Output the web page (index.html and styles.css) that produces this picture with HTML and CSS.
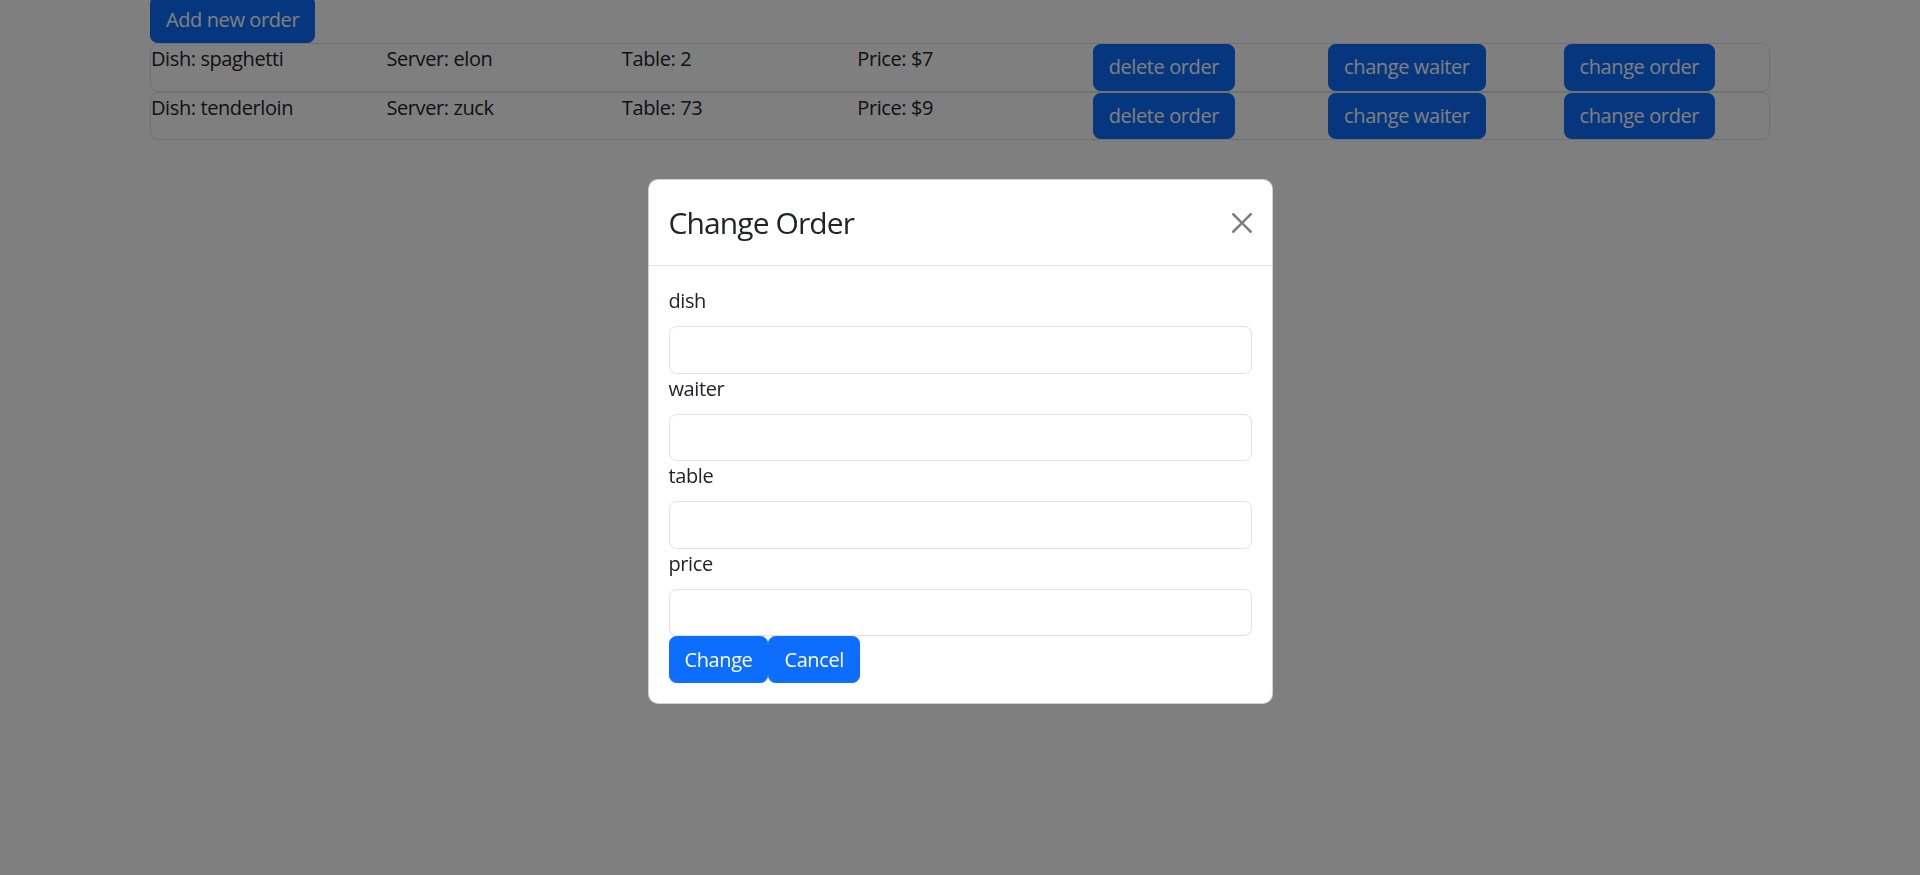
FILE: index.html
```html
<!DOCTYPE html>
<html lang="en">
<head>
<meta charset="utf-8">
<title>Orders</title>
<link rel="stylesheet" href="styles.css">
</head>
<body>
<div class="container">
  <div class="toolbar">
    <button class="btn btn-primary" type="button">Add new order</button>
  </div>
  <div class="order">
    <div class="order-row">
      <div class="cell">Dish: spaghetti</div>
      <div class="cell">Server: elon</div>
      <div class="cell">Table: 2</div>
      <div class="cell">Price: $7</div>
      <div class="cell"><button class="btn btn-primary btn-row" type="button">delete order</button></div>
      <div class="cell"><button class="btn btn-primary btn-row" type="button">change waiter</button></div>
      <div class="cell"><button class="btn btn-primary btn-row" type="button">change order</button></div>
    </div>
  </div>
  <div class="order">
    <div class="order-row">
      <div class="cell">Dish: tenderloin</div>
      <div class="cell">Server: zuck</div>
      <div class="cell">Table: 73</div>
      <div class="cell">Price: $9</div>
      <div class="cell"><button class="btn btn-primary btn-row" type="button">delete order</button></div>
      <div class="cell"><button class="btn btn-primary btn-row" type="button">change waiter</button></div>
      <div class="cell"><button class="btn btn-primary btn-row" type="button">change order</button></div>
    </div>
  </div>
</div>

<div class="modal">
  <div class="modal-dialog">
    <div class="modal-header">
      <h4 class="modal-title">Change Order</h4>
      <button class="btn-close" type="button" aria-label="Close">
        <svg viewBox="0 0 16 16" width="16" height="16" aria-hidden="true"><path d="M.293.293a1 1 0 0 1 1.414 0L8 6.586 14.293.293a1 1 0 1 1 1.414 1.414L9.414 8l6.293 6.293a1 1 0 0 1-1.414 1.414L8 9.414l-6.293 6.293a1 1 0 0 1-1.414-1.414L6.586 8 .293 1.707a1 1 0 0 1 0-1.414z"/></svg>
      </button>
    </div>
    <div class="modal-body">
      <label class="form-label" for="dish">dish</label>
      <input class="form-control" id="dish" type="text">
      <label class="form-label" for="waiter">waiter</label>
      <input class="form-control" id="waiter" type="text">
      <label class="form-label" for="table">table</label>
      <input class="form-control" id="table" type="text">
      <label class="form-label" for="price">price</label>
      <input class="form-control" id="price" type="text">
      <div class="actions">
        <button class="btn btn-primary" type="button">Change</button><button class="btn btn-primary" type="button">Cancel</button>
      </div>
    </div>
  </div>
</div>
</body>
</html>
```

FILE: styles.css
```css
html {
  zoom: 1.25;
}

*,
*::before,
*::after {
  box-sizing: border-box;
}

body {
  margin: 0;
  font-family: "Open Sans", "Noto Sans", "Liberation Sans", sans-serif;
  font-size: 16px;
  line-height: 1.5;
  color: #212529;
  background: #fff;
  overflow: hidden;
  letter-spacing: -0.02em;
}

.container {
  max-width: 1320px;
  margin: -3px auto 0;
  padding: 0 12px;
}

.toolbar {
  display: flex;
}

.btn {
  display: inline-block;
  font-family: inherit;
  font-size: 16px;
  line-height: 24px;
  letter-spacing: inherit;
  padding: 6px 12px;
  border: 1px solid transparent;
  border-radius: 6px;
  cursor: pointer;
  text-align: center;
}

.btn-primary {
  color: #fff;
  background: #0d6efd;
  border-color: #0d6efd;
}

.btn-row {
  padding: 5.75px 12px;
}

.order {
  border: 1px solid #dee2e6;
  border-radius: 6px;
}

.order-row {
  display: flex;
  margin: 0 -12px;
}

.cell {
  flex: 1 0 0;
  padding: 0 12px;
  white-space: nowrap;
}

.modal {
  position: fixed;
  inset: 0;
  padding-top: 7px;
  background: rgba(0, 0, 0, 0.5);
  display: flex;
  align-items: center;
  justify-content: center;
}

.modal-dialog {
  width: 500px;
  background: #fff;
  border: 1px solid rgba(0, 0, 0, 0.175);
  border-radius: 8px;
}

.modal-header {
  display: flex;
  align-items: center;
  padding: 16px;
  border-bottom: 1px solid #dee2e6;
}

.modal-title {
  margin: 0;
  font-size: 24px;
  font-weight: 400;
  line-height: 1.5;
  letter-spacing: -0.03em;
}

.btn-close {
  margin: -8px -8px -8px auto;
  padding: 8px;
  width: 32px;
  height: 32px;
  border: 0;
  background: transparent;
  opacity: 0.5;
  display: flex;
  align-items: center;
  justify-content: center;
  cursor: pointer;
}

.btn-close svg {
  display: block;
  fill: #000;
}

.modal-body {
  padding: 16px;
}

.form-label {
  display: block;
  margin-bottom: 8px;
}

.form-control {
  display: block;
  width: 100%;
  height: 38px;
  padding: 6px 12px;
  font-family: inherit;
  font-size: 16px;
  line-height: 24px;
  color: #212529;
  background: #fff;
  border: 1px solid #dee2e6;
  border-radius: 6px;
}

.actions {
  display: flex;
}
```
